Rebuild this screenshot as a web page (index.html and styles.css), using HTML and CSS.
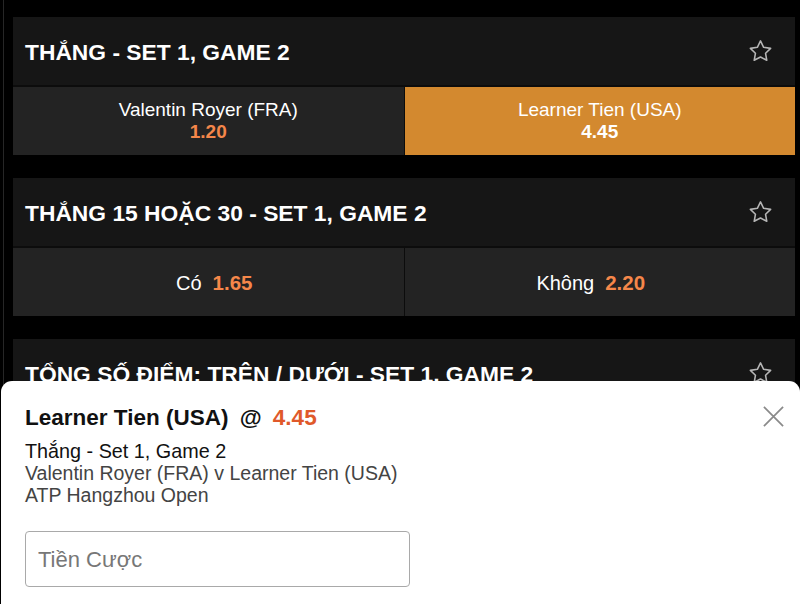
FILE: index.html
```html
<!DOCTYPE html>
<html lang="vi">
<head>
<meta charset="utf-8">
<title>Cược</title>
<link rel="stylesheet" href="styles.css">
</head>
<body>
<div class="page">
  <div class="rail"></div>
  <main class="markets">
    <section class="market">
      <header class="market-head">
        <h2 class="market-title">THẮNG - SET 1, GAME 2</h2>
        <svg class="star" viewBox="0 0 24 24" width="24" height="24"><path d="M12 2.6l2.8 5.7 6.2.9-4.5 4.4 1.1 6.2L12 16.9l-5.6 2.9 1.1-6.2L3 9.2l6.2-.9z" fill="none" stroke="#b5b5b5" stroke-width="1.4" stroke-linejoin="round"/></svg>
      </header>
      <div class="outcomes">
        <button class="outcome stacked">
          <span class="name">Valentin Royer (FRA)</span>
          <span class="odds">1.20</span>
        </button>
        <button class="outcome stacked selected">
          <span class="name">Learner Tien (USA)</span>
          <span class="odds">4.45</span>
        </button>
      </div>
    </section>

    <section class="market">
      <header class="market-head">
        <h2 class="market-title">THẮNG 15 HOẶC 30 - SET 1, GAME 2</h2>
        <svg class="star" viewBox="0 0 24 24" width="24" height="24"><path d="M12 2.6l2.8 5.7 6.2.9-4.5 4.4 1.1 6.2L12 16.9l-5.6 2.9 1.1-6.2L3 9.2l6.2-.9z" fill="none" stroke="#b5b5b5" stroke-width="1.4" stroke-linejoin="round"/></svg>
      </header>
      <div class="outcomes">
        <button class="outcome inline first">
          <span class="name">Có</span>
          <span class="odds">1.65</span>
        </button>
        <button class="outcome inline second">
          <span class="name">Không</span>
          <span class="odds">2.20</span>
        </button>
      </div>
    </section>

    <section class="market">
      <header class="market-head">
        <h2 class="market-title">TỔNG SỐ ĐIỂM: TRÊN / DƯỚI - SET 1, GAME 2</h2>
        <svg class="star" viewBox="0 0 24 24" width="24" height="24"><path d="M12 2.6l2.8 5.7 6.2.9-4.5 4.4 1.1 6.2L12 16.9l-5.6 2.9 1.1-6.2L3 9.2l6.2-.9z" fill="none" stroke="#b5b5b5" stroke-width="1.4" stroke-linejoin="round"/></svg>
      </header>
    </section>
  </main>

  <aside class="betslip">
    <div class="slip-head">
      <h3 class="selection">Learner Tien (USA) <span class="at">@</span> <span class="slip-odds">4.45</span></h3>
      <svg class="close" viewBox="0 0 24 24" width="24" height="24"><path d="M2 2L22 22M22 2L2 22" stroke="#8a8a8a" stroke-width="1.8" fill="none"/></svg>
    </div>
    <p class="market-name">Thắng - Set 1, Game 2</p>
    <p class="event">Valentin Royer (FRA) v Learner Tien (USA)</p>
    <p class="event">ATP Hangzhou Open</p>
    <input class="stake" type="text" placeholder="Tiền Cược">
  </aside>
</div>
</body>
</html>
```

FILE: styles.css
```css
* { box-sizing: border-box; }

html, body {
  margin: 0;
  padding: 0;
  background: #000;
  height: 100%;
  overflow: hidden;
}

body {
  font-family: "Liberation Sans", Arial, sans-serif;
  color: #fff;
}

.page {
  position: relative;
  display: flex;
  height: 604px;
}

.rail {
  width: 1px;
  margin-left: 3px;
  background: #262626;
  flex: none;
}

.markets {
  flex: 1;
  margin: 0 5px 0 9px;
  padding-top: 17px;
  display: flex;
  flex-direction: column;
  gap: 23px;
}

.market {
  display: flex;
  flex-direction: column;
  gap: 2px;
  background: #0c0c0c;
}

.market-head {
  height: 68px;
  background: #161616;
  display: flex;
  align-items: center;
  justify-content: space-between;
  padding: 3px 21px 0 12px;
}

.market-title {
  margin: 0;
  font-size: 22.8px;
  font-weight: 700;
  color: #fff;
}

.star {
  width: 27px;
  height: 27px;
  display: block;
  margin-top: -3px;
}

.outcomes {
  display: grid;
  grid-template-columns: 1fr 1fr;
  gap: 1px;
}

.outcome {
  height: 68px;
  border: 0;
  margin: 0;
  background: #232323;
  color: #fff;
  font-family: inherit;
  display: flex;
  align-items: center;
  justify-content: center;
  padding: 0;
}

.outcome.stacked {
  flex-direction: column;
  line-height: 22px;
  font-size: 19px;
}

.outcome.inline {
  gap: 11px;
  font-size: 20px;
  padding-top: 2px;
}

.outcome.inline.first {
  padding-left: 12px;
}

.outcome.inline.second {
  padding-right: 18px;
}

.outcome.inline .odds {
  font-size: 20.5px;
}

.outcome .odds {
  color: #f5874a;
  font-weight: 700;
}

.outcome.selected {
  background: #d3892f;
}

.outcome.selected .odds {
  color: #fff;
}

.betslip {
  position: absolute;
  left: 1px;
  right: 0;
  top: 381px;
  bottom: 0;
  background: #fff;
  border-radius: 11px 11px 0 0;
  color: #111;
  padding: 25px 15px 0 24px;
}

.slip-head {
  display: flex;
  justify-content: space-between;
  align-items: flex-start;
}

.selection {
  margin: 0;
  font-size: 22.5px;
  font-weight: 700;
  line-height: 24px;
  color: #111;
}

.at {
  margin: 0 5px 0 5px;
}

.slip-odds {
  color: #e0592a;
}

.close {
  width: 23px;
  height: 23px;
  margin-top: -1px;
}

.market-name {
  margin: 10px 0 0;
  font-size: 19.8px;
  line-height: 22px;
  color: #111;
}

.event {
  margin: 0;
  font-size: 19.5px;
  line-height: 22px;
  color: #444;
}

.stake {
  display: block;
  margin-top: 25px;
  width: 385px;
  height: 56px;
  border: 1px solid #a9a9a9;
  border-radius: 4px;
  padding: 2px 12px 0;
  font-family: inherit;
  font-size: 22px;
  color: #111;
  background: #fff;
}

.stake::placeholder {
  color: #777;
}
```
